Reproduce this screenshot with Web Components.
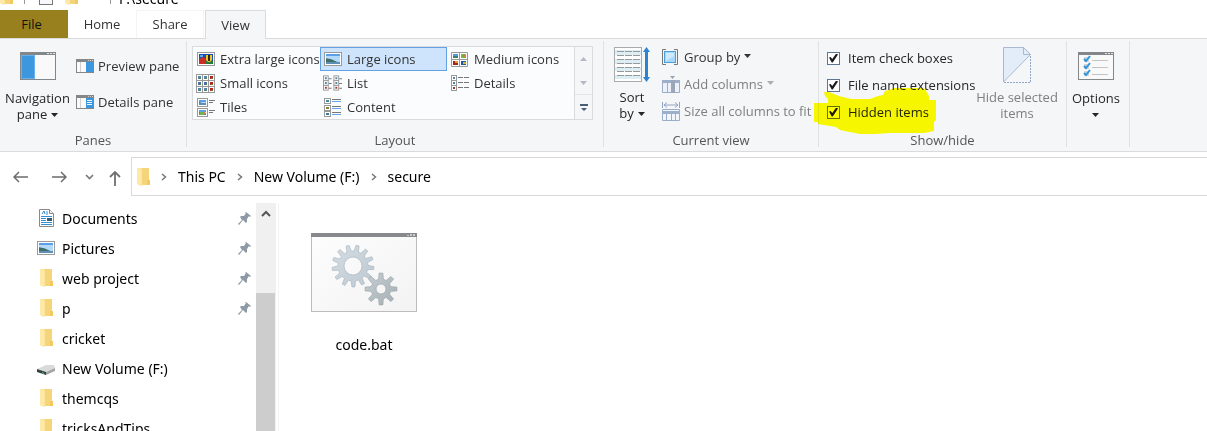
<!DOCTYPE html>
<html lang="en">
<head>
<meta charset="utf-8">
<title>secure</title>
<style>
  * { box-sizing: border-box; }
  html, body { height: 100%; }
  body {
    margin: 0;
    overflow: hidden;
    background: #fff;
    color: #000;
    font-family: "Noto Sans", "Open Sans", sans-serif;
    font-size: 14px;
  }
</style>
</head>
<body>
<explorer-window></explorer-window>

<script>
// ===== ICONS =====
// gear outline with flat teeth, centred on cx/cy
function gear(cx, cy, outer, inner, hole, teeth, turn) {
  const step = Math.PI * 2 / teeth;
  const pt = (r, a) => `${(cx + r * Math.cos(a)).toFixed(2)} ${(cy + r * Math.sin(a)).toFixed(2)}`;
  let d = '';
  for (let i = 0; i < teeth; i++) {
    const a = i * step + turn;
    d += `${i ? 'L' : 'M'}${pt(inner, a - step * 0.3)}L${pt(outer, a - step * 0.15)}L${pt(outer, a + step * 0.15)}L${pt(inner, a + step * 0.3)}`;
  }
  d += `ZM${cx + hole} ${cy}A${hole} ${hole} 0 1 0 ${cx - hole} ${cy}A${hole} ${hole} 0 1 0 ${cx + hole} ${cy}Z`;
  return d;
}

const picture = (x, y, w, h) => `
  <rect x="${x + 0.5}" y="${y + 0.5}" width="${w - 1}" height="${h - 1}" fill="#fff" stroke="#9a9a9a"/>
  <rect x="${x + 2}" y="${y + 2}" width="${w - 4}" height="${h - 4}" fill="#b4dafa"/>
  <path d="M${x + 2} ${y + 2}h${w - 4}v2h${4 - w}z" fill="#5b9fe8"/>
  <path d="M${x + 2} ${y + h * 0.45}l${w * 0.3} 1 ${w * 0.48} ${h * 0.28}V${y + h - 2}H${x + 2}z" fill="#3f6f68"/>
  <path d="M${x + 2} ${y + h - 4}h${w - 4}v2h${4 - w}z" fill="#5d8fb4"/>`;

const thumb = (x, y, s, c) => `
  <rect x="${x + 0.5}" y="${y + 0.5}" width="${s}" height="${s}" fill="#fff" stroke="#999"/>
  <path d="M${x + 2} ${y + 2}h${s - 3}v${s - 3}h${3 - s}z" fill="${c}"/>`;

const smallGrid = [0, 6, 12].map(y => [0, 6, 12].map((x, i) =>
  thumb(x, y, 6, i === 2 ? '#b3271c' : (y === 6 ? '#4b6f9b' : '#5584a5')) +
  `<path d="M${x + 3} ${y + 4}h2v1h-2z" fill="#4d8c42"/>`).join('')).join('');

const windowFrame = `
  <path d="M0 0h36v28H0z" fill="#84878a"/>
  <path d="M1 3h34v24H1z" fill="#f9f9f9"/>
  <path d="M27 1h2v1h-2zM30 1h2v1h-2zM33 1h2v1h-2z" fill="#e8e8e8"/>`;

const smallFrame = `
  <path d="M0 0h18v14H0z" fill="#84878a"/>
  <path d="M1 3h16v10H1z" fill="#fafafa"/>
  <path d="M12 1h1v1h-1zM14 1h1v1h-1zM16 1h1v1h-1zM4 3h1v10H4z" fill="#d0d0d0"/>
  <path d="M10 3h7v10h-7z" fill="#3d97df"/>`;

const ICONS = {
  navigation: [36, 28, windowFrame + '<path d="M1 3h14v24H1z" fill="#69b1ed"/><path d="M2 4h12v22H2z" fill="#3c97de"/>'],
  preview: [18, 14, smallFrame],
  details: [18, 14, smallFrame + '<path d="M11 5h5v1h-5zM11 7h5v1h-5zM11 9h5v1h-5z" fill="#e9f5ff"/>'],
  options: [36, 28, windowFrame + [7, 14, 21].map(y => `
    <path d="M6 ${y - 2}h5v5H6z" fill="#d5d5d5"/>
    <path d="M6 ${y}l2 2 4-5" fill="none" stroke="#2f96df" stroke-width="2"/>
    <path d="M14 ${y + 1}h16v1H14z" fill="#c4c4c4"/>`).join('')],
  extraLarge: [18, 14, `
    <rect x=".5" y=".5" width="17" height="13" fill="#fff" stroke="#999"/>
    <path d="M2 2h14v10H2z" fill="#174eb6"/>
    <path d="M2 8l3-3 3 1 2 3v3H2z" fill="#cc2c28"/>
    <path d="M8 9h8v3H8z" fill="#247d36"/>
    <path d="M9 3h6v5l-2 2h-2L9 8z" fill="#f2c520"/>
    <path d="M11 3h2v6h-2z" fill="#2d2313"/>
    <path d="M3 3h3v2H3z" fill="#63a7e6"/>`],
  large: [18, 14, picture(0, 0, 18, 14)],
  medium: [17, 15, `
    <path d="M.5 .5h16v14H.5zM8.500 0v15M0 7.500h17" fill="#fff" stroke="#999"/>
    <path d="M2 2h5v2H2z" fill="#4f9edb"/><path d="M2 4h5v2H2z" fill="#407e6b"/>
    <path d="M10 2h5v4h-5z" fill="#78b64a"/><path d="M12 3h2v2h-2z" fill="#e96846"/>
    <path d="M2 9h5v4H2z" fill="#a3241b"/><path d="M4 9h3v2H4z" fill="#e59c24"/>
    <path d="M10 9h5v4h-5z" fill="#2454a5"/><path d="M12 10h3v2h-3z" fill="#d4ba31"/>`],
  small: [19, 19, smallGrid],
  list: [20, 16, [0, 11].map(x => thumb(x, 0, 5, '#4c88a6') + thumb(x, 5, 5, '#4c80a0') + thumb(x, 10, 5, '#a83227') +
    `<path d="M${x + 6} 3h3v1h-3zM${x + 6} 8h3v1h-3zM${x + 6} 13h3v1h-3z" fill="#777"/>`).join('')],
  detailList: [18, 16, thumb(0, 0, 5, '#4c88a6') + thumb(0, 5, 5, '#4c80a0') + thumb(0, 10, 5, '#a83227') +
    '<path d="M7 2h5v1H7zM13 2h5v1h-5zM7 7h5v1H7zM13 7h5v1h-5zM7 12h5v1H7zM13 12h5v1h-5z" fill="#777"/>'],
  tiles: [18, 19, picture(0, 0, 11, 9) + picture(0, 10, 11, 9) +
    '<path d="M3 14h4v3H3z" fill="#72b24c"/><path d="M6 14h2v2H6z" fill="#e57f3c"/><path d="M12 2h6v1h-6zM12 4h4v1h-4zM12 12h6v1h-6zM12 14h4v1h-4z" fill="#777"/>'],
  content: [18, 19, [0, 7, 13].map((y, i) => `
    <rect x=".5" y="${y + 0.5}" width="6" height="5" fill="#fff" stroke="#999"/>
    <path d="M2 ${y + 2}h3v2H2z" fill="${['#418aa0', '#84843b', '#397996'][i]}"/>
    <path d="M8 ${y + 1}h9v1H8z" fill="#777"/><path d="M8 ${y + 3}h9v1H8z" fill="#65a4ee"/>`).join('')],
  sort: [36, 36, `
    <rect x=".5" y=".5" width="27" height="34" fill="#fff" stroke="#aaa"/>
    <path d="M1 3h26v5H1zM1 12h26v5H1zM1 20h26v4H1zM1 28h26v4H1z" fill="#dceef3"/>
    <path d="M3 4.500h23M3 8.500h23M3 12.500h23M3 16.500h23M3 20.500h23M3 24.500h23M3 28.500h23" stroke="#999" stroke-dasharray="7 1"/>
    <path d="M32.500 0l3.500 5h-2v25h2l-3.500 5-3.500-5h2V5h-2z" fill="#2c83cf"/>`],
  group: [18, 16, `
    <path d="M4 .5H.5v15H4M12 .5h3.500v15H12" fill="none" stroke="#777"/>
    <rect x="2.500" y="2.500" width="11" height="11" fill="#a8d9fb" stroke="#4c9fdb"/>
    <path d="M4 4h8v3l-8 5z" fill="#cdeaff"/>`],
  columns: [18, 17, `
    <path d="M8 0h5l-2.500 3z" fill="#96a2b6"/>
    <path d="M.5 5.500h17v11H.5zM5.500 5v12M12.500 5v12" fill="#edf1fa" stroke="#9badca"/>
    <path d="M0 4h18v3H0z" fill="#9dafcb"/><path d="M9 4h4v13H9z" fill="#9ba6b8"/>`],
  size: [18, 19, `
    <path d="M.5 0v6M17.500 0v6M2 3h14M5 .5L2 3l3 2.500M13 .5L16 3l-3 2.500" fill="none" stroke="#91a4c4"/>
    <path d="M.5 7.500h17v11H.5zM4.500 12v7M9.500 12v7M13.500 12v7" fill="#f1f5fc" stroke="#9badca"/>
    <path d="M0 9h18v3H0z" fill="#9dafcb"/>`],
  hide: [28, 36, `
    <path d="M0 0h21l7 7-28 28z" fill="#e3edfa"/>
    <path d="M.5 35V.5h20l7 7L.5 35M20.500 .5v7h7" fill="none" stroke="#aab9cf"/>
    <path d="M27.500 9v26.500H1" fill="none" stroke="#91a7c6" stroke-dasharray="2 1"/>`],
  folder: [13, 18, `
    <path d="M4 0h8v12l1 1v4H4z" fill="#f6d479"/>
    <path d="M10 12h3v5h-3z" fill="#f3ca61"/>
    <path d="M0 0h4l1 1v16l-1 1-4-2z" fill="#fde59c"/>
    <path d="M1 0l3 3v15l-4-2V0z" fill="#ffe9a8"/>`],
  document: [15, 18, `
    <path d="M.5 .5h10l4 4v13H.5z" fill="#fff" stroke="#8a8a8a"/>
    <path d="M10.500 .5v4h4" fill="#eee" stroke="#8a8a8a"/>
    <path d="M3 5l2-3 1 3M7 3h2M7 5h2M2 7.500h11M2 9.500h5M2 11.500h5M2 13.500h11M2 15.500h11" fill="none" stroke="#3490d2"/>
    <path d="M8 9h5v3H8z" fill="#315d75"/>`],
  drive: [18, 14, `
    <path d="M0 8l9-4h8l1 3-9 4z" fill="#d9dadb"/>
    <path d="M0 8l9 3v3l-9-3z" fill="#37413d"/><path d="M9 11l9-4v3l-9 4z" fill="#a3a5a6"/>
    <path d="M5 11l2 1v1l-2-1z" fill="#36d870"/>`],
  pin: [13, 13, '<path d="M8 0l5 4-1 1-1-1-2 3v3l-1 1-3-3-4 5-1-1 4-4-2-3 1-1h3l2-3-1-1z" fill="#8d99a5"/>'],
  back: [15, 12, '<path d="M15 6H1M6 1L1 6l5 5" fill="none" stroke="#6c6c6c" stroke-width="1.500"/>'],
  forward: [15, 12, '<path d="M0 6h14M9 1l5 5-5 5" fill="none" stroke="#6c6c6c" stroke-width="1.500"/>'],
  recent: [9, 6, '<path d="M1 1l3.500 3.500L8 1" fill="none" stroke="#777" stroke-width="1.600"/>'],
  up: [12, 16, '<path d="M6 16V2M1 7l5-5 5 5" fill="none" stroke="#707070" stroke-width="1.800"/>'],
  crumb: [6, 8, '<path d="M1 1l3.500 3L1 7" fill="none" stroke="#777" stroke-width="1.500"/>'],
  caret: [7, 4, '<path d="M0 0h7L3.500 4z" fill="currentColor"/>'],
  caretUp: [7, 4, '<path d="M3.500 0L7 4H0z" fill="currentColor"/>'],
  more: [8, 7, '<path d="M0 0h8v2H0zM1 4h6L4 7z" fill="#4a5c74"/>'],
  scrollUp: [10, 7, '<path d="M1 6l4-4 4 4" fill="none" stroke="#555" stroke-width="2"/>'],
  page: [14, 16, '<rect x=".5" y=".5" width="13" height="15" fill="#f6f8fc" stroke="#777"/>'],
  batch: [106, 80, `
    <defs>
      <linearGradient id="paper" x2="1" y2="1"><stop stop-color="#fdfdfd"/><stop offset="1" stop-color="#f3f3f3"/></linearGradient>
      <linearGradient id="steel" x2="1" y2="1"><stop stop-color="#d5dde3"/><stop offset="1" stop-color="#bcc8d1"/></linearGradient>
      <linearGradient id="iron" x2="1" y2="1"><stop stop-color="#c6ced3"/><stop offset="1" stop-color="#a5afb3"/></linearGradient>
    </defs>
    <rect x=".5" y=".5" width="105" height="78" fill="url(#paper)" stroke="#bdbdbd"/>
    <path d="M0 0h106v4H0z" fill="#87898c"/>
    <path d="M96 2h2v1h-2zM99 1h2v2h-2zM102 1h2v2h-2z" fill="#ccc"/>
    <path d="${gear(42, 33, 21, 15, 9, 13, 0.1)}" fill="url(#steel)" stroke="#acb8c1" stroke-width=".7" fill-rule="evenodd"/>
    <path d="${gear(70, 56, 16, 10, 5, 8, 0)}" fill="url(#iron)" stroke="#9aa6ac" stroke-width=".7" fill-rule="evenodd"/>`]
};

class FxIcon extends HTMLElement {
  connectedCallback() {
    if (this.shadowRoot) return;
    const [w, h, body] = ICONS[this.getAttribute('name')];
    this.attachShadow({ mode: 'open' }).innerHTML = `
      <style>
        :host { display: inline-flex; flex: none; justify-content: center; }
        svg { display: block; }
      </style>
      <svg width="${w}" height="${h}" viewBox="0 0 ${w} ${h}" aria-hidden="true">${body}</svg>`;
  }
}

// ===== BASE =====
const RESET = `
  * { box-sizing: border-box; }
  button {
    margin: 0; padding: 0; border: 0; background: none;
    color: inherit; font: inherit; text-align: inherit;
  }
  a { color: inherit; text-decoration: none; }
`;

class FxElement extends HTMLElement {
  connectedCallback() {
    if (this.shadowRoot) return;
    this.attachShadow({ mode: 'open' }).innerHTML = `<style>${RESET}${this.css()}</style>${this.html()}`;
  }
  attr(name) { return this.getAttribute(name) || ''; }
}

// ===== RIBBON =====
class RibbonTab extends FxElement {
  css() {
    return `
      :host { display: flex; width: 68px; }
      :host([kind="view"]) { width: 61px; }
      button { width: 100%; padding-bottom: 1px; border: 1px solid transparent; border-bottom: 0; text-align: center; }
      :host([kind="file"]) button { background: #98801e; color: #111; padding-right: 5px; }
      :host([kind="share"]) button { border-color: #f4f4f4; }
      :host([kind="view"]) button { border-color: #dadbdc; background: #f5f6f7; }
      :host([kind="view"]) { margin-bottom: -1px; }
    `;
  }
  html() {
    return `<button role="tab" aria-selected="${this.attr('kind') === 'view'}"><slot></slot></button>`;
  }
}

class RibbonGroup extends FxElement {
  css() {
    return `
      :host { display: flex; flex: none; flex-direction: column; margin: 2px 0 4px; border-right: 1px solid #e0e1e2; }
      .body { display: flex; flex: 1; align-items: flex-start; }
      .label { height: 14px; line-height: 14px; color: #555; text-align: center; }
    `;
  }
  html() {
    return `<div class="body"><slot></slot></div><div class="label">${this.attr('label')}</div>`;
  }
}

// tall button: icon above one or two lines of text
class RibbonBig extends FxElement {
  css() {
    return `
      :host { display: block; color: #262626; }
      :host([disabled]) { color: #7f7f7f; }
      button { display: flex; flex-direction: column; align-items: center; width: 100%; line-height: 16px; }
      .icon { display: flex; align-items: center; height: 48px; }
      .text { text-align: center; white-space: nowrap; }
      fx-icon { vertical-align: middle; }
      .text fx-icon { margin-left: 4px; padding-bottom: 2px; }
      .text .alone { margin-left: 0; }
    `;
  }
  html() {
    const [first, second] = this.attr('text').split('|');
    const caret = this.hasAttribute('caret') ? `<fx-icon name="caret" class="${second ? '' : 'alone'}"></fx-icon>` : '';
    return `
      <button ${this.hasAttribute('disabled') ? 'disabled' : ''}>
        <span class="icon"><fx-icon name="${this.attr('icon')}"></fx-icon></span>
        <span class="text">${first}<br>${second || ''}${caret}</span>
      </button>`;
  }
}

class RibbonSmall extends FxElement {
  css() {
    return `
      :host { display: block; color: #333; }
      :host([disabled]) { color: #7f7f7f; }
      button { display: flex; align-items: center; gap: 4px; height: 20px; white-space: nowrap; }
      fx-icon.lead { width: 18px; }
      .drop { padding-bottom: 2px; }
      :host([disabled]) .drop { opacity: 0.6; }
    `;
  }
  html() {
    return `
      <button ${this.hasAttribute('disabled') ? 'disabled' : ''}>
        <fx-icon class="lead" name="${this.attr('icon')}"></fx-icon>
        <slot></slot>
        ${this.hasAttribute('caret') ? '<fx-icon class="drop" name="caret"></fx-icon>' : ''}
      </button>`;
  }
}

class GalleryItem extends FxElement {
  css() {
    return `
      :host { display: block; }
      button {
        display: flex; align-items: center; gap: 5px; width: 100%; height: 24px;
        padding-left: 2px; border: 1px solid transparent; white-space: nowrap;
      }
      :host([selected]) button { border-color: #62a2e4; background: #cde4fc; }
      fx-icon { width: 19px; }
    `;
  }
  html() {
    return `<button aria-pressed="${this.hasAttribute('selected')}"><fx-icon name="${this.attr('icon')}"></fx-icon><slot></slot></button>`;
  }
}

class LayoutGallery extends FxElement {
  css() {
    return `
      :host { display: flex; border: 1px solid #dadbdc; background: #fbfcfe; color: #333; }
      .items { display: grid; grid-template-columns: repeat(3, 127px); grid-auto-rows: 24px; }
      .scroll { display: flex; flex-direction: column; width: 18px; border-left: 1px solid #dadbdc; background: #f5f6f7; color: #b4b9c4; }
      .scroll button { flex: 1; display: flex; align-items: center; justify-content: center; }
      .scroll button:last-child { border-top: 1px solid #e4e5e6; }
    `;
  }
  html() {
    return `
      <div class="items"><slot></slot></div>
      <div class="scroll">
        <button aria-label="Up"><fx-icon name="caretUp"></fx-icon></button>
        <button aria-label="Down"><fx-icon name="caret"></fx-icon></button>
        <button aria-label="More"><fx-icon name="more"></fx-icon></button>
      </div>`;
  }
}

class RibbonCheck extends FxElement {
  css() {
    return `
      :host { display: block; color: #262626; }
      label { display: flex; align-items: center; gap: 8px; height: 20px; white-space: nowrap; }
      input {
        appearance: none; display: grid; flex: none; place-items: center;
        width: 13px; height: 13px; margin: 0; border: 1px solid #5e7594; background: #fff;
      }
      input:checked::before {
        content: ""; width: 9px; height: 9px; background: #1c1c1c;
        clip-path: polygon(0 45%, 18% 40%, 36% 62%, 80% 0, 100% 10%, 42% 100%, 30% 100%);
      }
    `;
  }
  html() {
    return `<label><input type="checkbox" checked><slot></slot></label>`;
  }
}

// hand-drawn marker stroke lying over the check boxes
class MarkerStroke extends FxElement {
  css() {
    return `
      :host { position: absolute; left: -13px; top: 47px; mix-blend-mode: multiply; pointer-events: none; }
      svg { display: block; }
    `;
  }
  html() {
    return `
      <svg width="122" height="46" viewBox="0 0 122 46" aria-hidden="true">
        <path d="M0 15h14v-4l-3-3-1-4h5l10 4 12 3h19l8-3 5-1 2-4 7-2 4-3h22l7 3 4 7v4h8v19l-3 3v9l-10 2H76l-15 1H46l-20-4-4-3-18-3v-2H0z" fill="#ff0"/>
      </svg>`;
  }
}

class ExplorerRibbon extends FxElement {
  css() {
    return `
      :host {
        display: flex; height: 114px; border: solid #dadbdc; border-width: 1px 0;
        background: #f5f6f7; font-family: "Open Sans", "Noto Sans", sans-serif; font-size: 13px;
      }
      .panes { width: 187px; }
      .panes ribbon-big { width: 75px; padding-top: 1px; }
      .panes .stack { gap: 16px; padding: 15px 0 0 1px; }
      .layout { width: 417px; }
      layout-gallery { margin: 5px 0 0 5px; }
      .current { width: 215px; }
      .current ribbon-big { width: 56px; }
      .stack { display: flex; flex-direction: column; gap: 7px; padding: 6px 0 0 2px; }
      .show { width: 248px; }
      .checks { position: relative; padding: 7px 0 0; margin-left: 8px; width: 141px; }
      .show ribbon-big { width: 98px; }
      .options { width: 63px; }
      .options ribbon-big { width: 58px; padding-top: 1px; }
    `;
  }
  html() {
    return `
      <ribbon-group class="panes" label="Panes">
        <ribbon-big icon="navigation" text="Navigation|pane" caret></ribbon-big>
        <div class="stack">
          <ribbon-small icon="preview">Preview pane</ribbon-small>
          <ribbon-small icon="details">Details pane</ribbon-small>
        </div>
      </ribbon-group>
      <ribbon-group class="layout" label="Layout">
        <layout-gallery>
          <gallery-item icon="extraLarge">Extra large icons</gallery-item>
          <gallery-item icon="large" selected>Large icons</gallery-item>
          <gallery-item icon="medium">Medium icons</gallery-item>
          <gallery-item icon="small">Small icons</gallery-item>
          <gallery-item icon="list">List</gallery-item>
          <gallery-item icon="detailList">Details</gallery-item>
          <gallery-item icon="tiles">Tiles</gallery-item>
          <gallery-item icon="content">Content</gallery-item>
        </layout-gallery>
      </ribbon-group>
      <ribbon-group class="current" label="Current view">
        <ribbon-big icon="sort" text="Sort|by" caret></ribbon-big>
        <div class="stack">
          <ribbon-small icon="group" caret>Group by</ribbon-small>
          <ribbon-small icon="columns" caret disabled>Add columns</ribbon-small>
          <ribbon-small icon="size" disabled>Size all columns to fit</ribbon-small>
        </div>
      </ribbon-group>
      <ribbon-group class="show" label="Show/hide">
        <div class="stack checks">
          <ribbon-check>Item check boxes</ribbon-check>
          <ribbon-check>File name extensions</ribbon-check>
          <ribbon-check>Hidden items</ribbon-check>
          <marker-stroke></marker-stroke>
        </div>
        <ribbon-big icon="hide" text="Hide selected|items" disabled></ribbon-big>
      </ribbon-group>
      <ribbon-group class="options" label="">
        <ribbon-big icon="options" text="Options" caret></ribbon-big>
      </ribbon-group>`;
  }
}

// ===== ADDRESS BAR =====
class AddressBar extends FxElement {
  css() {
    return `
      :host { display: flex; align-items: center; height: 51px; padding: 5px 0 7px 13px; }
      button { display: flex; }
      .forward { margin-left: 24px; }
      .recent { margin-left: 18px; }
      .up { margin-left: 15px; padding-top: 3px; }
      nav {
        display: flex; flex: 1; align-items: center; align-self: stretch; gap: 11px;
        margin-left: 10px; padding-left: 5px; border: 1px solid #d9d9d9; border-right: 0; white-space: nowrap;
      }
    `;
  }
  html() {
    return `
      <button aria-label="Back"><fx-icon name="back"></fx-icon></button>
      <button class="forward" aria-label="Forward"><fx-icon name="forward"></fx-icon></button>
      <button class="recent" aria-label="Recent locations"><fx-icon name="recent"></fx-icon></button>
      <button class="up" aria-label="Up"><fx-icon name="up"></fx-icon></button>
      <nav>
        <fx-icon name="folder"></fx-icon>
        <fx-icon name="crumb"></fx-icon><a href="#">This PC</a>
        <fx-icon name="crumb"></fx-icon><a href="#">New Volume (F:)</a>
        <fx-icon name="crumb"></fx-icon><a href="#">secure</a>
      </nav>`;
  }
}

// ===== SIDEBAR =====
class TreeItem extends FxElement {
  css() {
    return `
      :host { display: block; }
      a { display: flex; align-items: center; height: 30px; padding: 0 5px 0 37px; white-space: nowrap; }
      .lead { width: 18px; margin-right: 7px; }
      .name { flex: 1; }
    `;
  }
  html() {
    return `
      <a href="#">
        <fx-icon class="lead" name="${this.attr('icon')}"></fx-icon>
        <span class="name"><slot></slot></span>
        ${this.hasAttribute('pinned') ? '<fx-icon name="pin"></fx-icon>' : ''}
      </a>`;
  }
}

class SideTree extends FxElement {
  css() {
    return `
      :host { display: flex; width: 279px; border-right: 1px solid #f3f3f3; overflow: hidden; }
      .list { flex: 1; }
      .bar { display: flex; flex-direction: column; width: 20px; margin-right: 2px; background: #f0f0f0; }
      .bar button { display: flex; justify-content: center; height: 90px; padding-top: 7px; }
      .thumb { flex: 1; margin-right: 1px; background: #cdcdcd; }
    `;
  }
  html() {
    return `
      <div class="list"><slot></slot></div>
      <div class="bar">
        <button aria-label="Scroll up"><fx-icon name="scrollUp"></fx-icon></button>
        <div class="thumb"></div>
      </div>`;
  }
}

class FileTile extends FxElement {
  css() {
    return `
      :host { display: block; width: 120px; }
      a { display: flex; flex-direction: column; align-items: center; gap: 22px; line-height: 20px; }
    `;
  }
  html() {
    return `<a href="#"><fx-icon name="batch"></fx-icon><slot></slot></a>`;
  }
}

// ===== WINDOW =====
class ExplorerWindow extends FxElement {
  css() {
    return `
      :host { display: flex; flex-direction: column; height: 100vh; }
      /* title strip is scrolled mostly out of the top edge */
      .title { display: flex; align-items: flex-end; height: 10px; overflow: hidden; }
      .title fx-icon { padding-bottom: 5px; }
      .title .rule { width: 1px; height: 6px; margin: 0 0 6px 11px; background: #999; }
      .title .page { margin-left: 14px; }
      .title .open { margin-left: 12px; }
      .title .last { margin-left: 32px; }
      .title .name { margin-left: 8px; line-height: 20px; padding-bottom: 1px; }
      .tabs {
        display: flex; height: 28px; color: #333;
        font-family: "Open Sans", "Noto Sans", sans-serif; font-size: 13px;
      }
      .tabs ribbon-tab { position: relative; z-index: 1; }
      .tabs .view { margin-left: 1px; }
      .main { display: flex; flex: 1; min-height: 0; }
      .files { flex: 1; padding: 30px 25px; }
    `;
  }
  html() {
    return `
      <div class="title">
        <fx-icon name="folder"></fx-icon>
        <span class="rule"></span>
        <fx-icon class="page" name="page"></fx-icon>
        <fx-icon class="open" name="folder"></fx-icon>
        <span class="rule last"></span>
        <span class="name">F:\\secure</span>
      </div>
      <div class="tabs" role="tablist">
        <ribbon-tab kind="file">File</ribbon-tab>
        <ribbon-tab>Home</ribbon-tab>
        <ribbon-tab kind="share">Share</ribbon-tab>
        <ribbon-tab class="view" kind="view">View</ribbon-tab>
      </div>
      <explorer-ribbon></explorer-ribbon>
      <address-bar></address-bar>
      <div class="main">
        <side-tree>
          <tree-item icon="document" pinned>Documents</tree-item>
          <tree-item icon="large" pinned>Pictures</tree-item>
          <tree-item icon="folder" pinned>web project</tree-item>
          <tree-item icon="folder" pinned>p</tree-item>
          <tree-item icon="folder">cricket</tree-item>
          <tree-item icon="drive">New Volume (F:)</tree-item>
          <tree-item icon="folder">themcqs</tree-item>
          <tree-item icon="folder">tricksAndTips</tree-item>
        </side-tree>
        <div class="files"><file-tile>code.bat</file-tile></div>
      </div>`;
  }
}

// ===== REGISTER =====
customElements.define('fx-icon', FxIcon);
customElements.define('ribbon-tab', RibbonTab);
customElements.define('ribbon-group', RibbonGroup);
customElements.define('ribbon-big', RibbonBig);
customElements.define('ribbon-small', RibbonSmall);
customElements.define('gallery-item', GalleryItem);
customElements.define('layout-gallery', LayoutGallery);
customElements.define('ribbon-check', RibbonCheck);
customElements.define('marker-stroke', MarkerStroke);
customElements.define('explorer-ribbon', ExplorerRibbon);
customElements.define('address-bar', AddressBar);
customElements.define('tree-item', TreeItem);
customElements.define('side-tree', SideTree);
customElements.define('file-tile', FileTile);
customElements.define('explorer-window', ExplorerWindow);
</script>
</body>
</html>
